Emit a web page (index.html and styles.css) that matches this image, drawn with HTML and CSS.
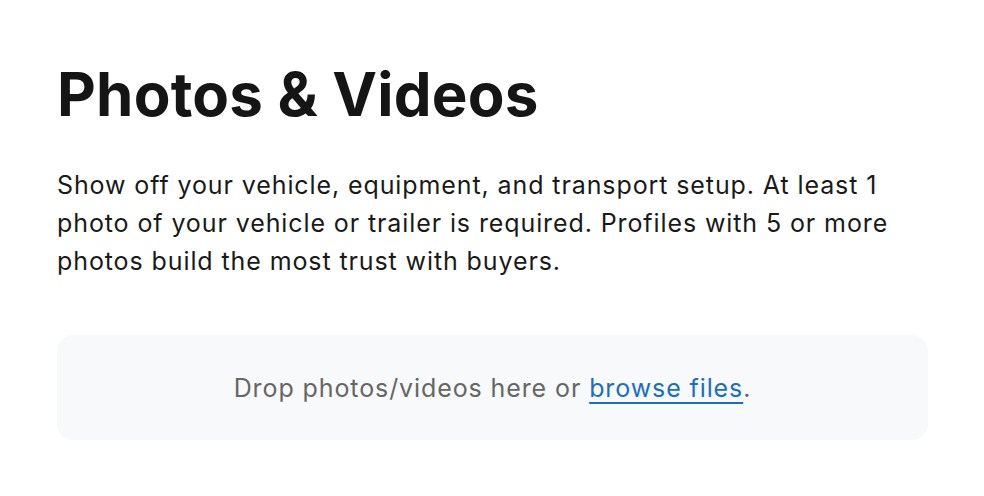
FILE: index.html
```html
<!DOCTYPE html>
<html lang="en">
<head>
<meta charset="utf-8">
<link rel="stylesheet" href="styles.css">
</head>
<body>
<main class="section">
  <h1 class="title">Photos &amp; Videos</h1>
  <p class="lead">Show off your vehicle, equipment, and transport setup. At least 1 photo of your vehicle or trailer is required. Profiles with 5 or more photos build the most trust with buyers.</p>
  <div class="dropzone">
    <span class="drop-text">Drop photos/videos here or <a class="browse" href="#">browse files</a>.</span>
  </div>
</main>
</body>
</html>
```

FILE: styles.css
```css
html, body {
  margin: 0;
  padding: 0;
  background: #ffffff;
}
body {
  font-family: Inter, "Noto Sans", sans-serif;
  color: #161616;
}
.section {
  width: 871px;
  padding: 56px 0 0 57px;
}
.title {
  margin: 0;
  font-size: 60px;
  font-weight: 700;
  line-height: 76px;
  letter-spacing: 0.2px;
  color: #151515;
}
.lead {
  margin: 34px 0 0;
  font-size: 25px;
  line-height: 38px;
  font-weight: 400;
  color: #1a1a1a;
  letter-spacing: 0.9px;
}
.dropzone {
  margin-top: 55px;
  height: 105px;
  background: #f8f9fb;
  border-radius: 16px;
  display: flex;
  align-items: center;
  justify-content: center;
}
.drop-text {
  font-size: 25px;
  color: #666666;
  letter-spacing: 0.9px;
}
.browse {
  color: #1a6fc4;
  text-decoration: underline;
  text-decoration-thickness: 2px;
  text-underline-offset: 5px;
}
```
